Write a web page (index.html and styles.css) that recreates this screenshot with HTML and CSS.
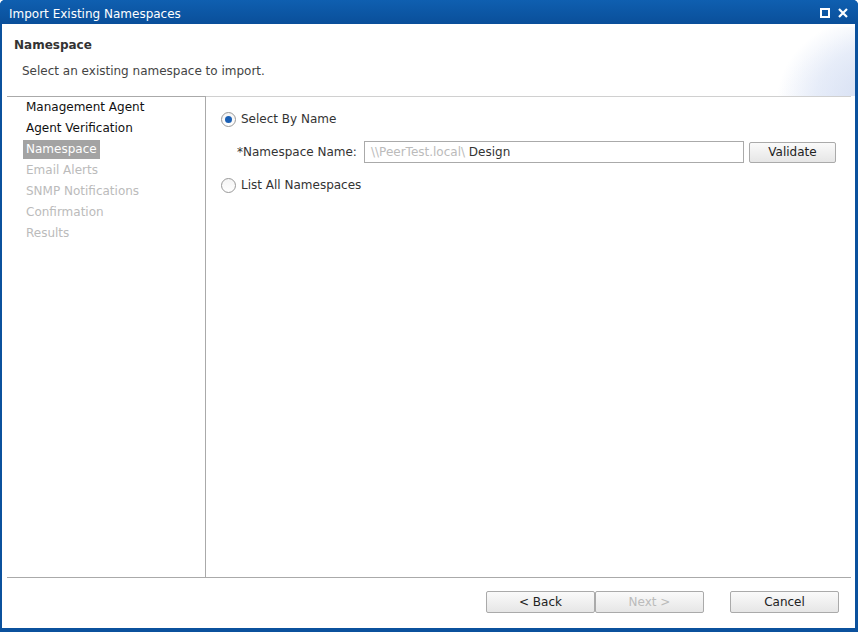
FILE: index.html
```html
<!DOCTYPE html>
<html lang="en">
<head>
    <meta charset="UTF-8">
    <meta name="viewport" content="width=device-width, initial-scale=1.0">
    <title>Import Existing Namespaces</title>
    <link rel="stylesheet" href="styles.css">
</head>
<body>
    <div class="window">
        <div class="titlebar">
            <span class="title">Import Existing Namespaces</span>
            <div class="title-buttons">
                <svg width="10" height="10" viewBox="0 0 10 10"><rect x="1" y="1" width="8" height="8" fill="none" stroke="#fff" stroke-width="2"/></svg>
                <svg width="10" height="10" viewBox="0 0 10 10"><path d="M1 1 L9 9 M9 1 L1 9" stroke="#fff" stroke-width="2.2"/></svg>
            </div>
        </div>
        <div class="client">
            <div class="header">
                <div class="header-title">Namespace</div>
                <div class="header-sub">Select an existing namespace to import.</div>
            </div>
            <div class="main">
                <ul class="nav">
                    <li class="done"><span>Management Agent</span></li>
                    <li class="done"><span>Agent Verification</span></li>
                    <li class="current"><span>Namespace</span></li>
                    <li class="todo"><span>Email Alerts</span></li>
                    <li class="todo"><span>SNMP Notifications</span></li>
                    <li class="todo"><span>Confirmation</span></li>
                    <li class="todo"><span>Results</span></li>
                </ul>
                <div class="page">
                    <label class="option">
                        <span class="radio checked"></span>
                        Select By Name
                    </label>
                    <div class="name-row">
                        <span class="field-label">*Namespace Name:</span>
                        <div class="textbox"><span class="prefix">\\PeerTest.local\</span> Design</div>
                        <button class="btn validate">Validate</button>
                    </div>
                    <label class="option">
                        <span class="radio"></span>
                        List All Namespaces
                    </label>
                </div>
            </div>
            <div class="footer">
                <button class="btn">&lt; Back</button>
                <button class="btn" disabled>Next &gt;</button>
                <button class="btn cancel">Cancel</button>
            </div>
        </div>
    </div>
</body>
</html>
```

FILE: styles.css
```css
body {
    margin: 0;
    font-family: "DejaVu Sans", Verdana, sans-serif;
    font-size: 12px;
    color: #222;
    background: #fff;
}
.window {
    width: 858px;
    height: 632px;
    box-sizing: border-box;
    display: flex;
    flex-direction: column;
    background: #0b519d;
    border-radius: 5px 5px 0 0;
    padding: 0 3px 4px 2px;
}
.titlebar {
    height: 24px;
    box-sizing: border-box;
    display: flex;
    align-items: center;
    justify-content: space-between;
    padding: 3px 10px 0 9px;
    background: linear-gradient(#0f5fb0, #0a4f9a);
    border-radius: 5px 5px 0 0;
    margin: 0 -3px 0 -2px;
    color: #fff;
    font-size: 12px;
}
.title-buttons {
    display: flex;
    gap: 8px;
    padding-bottom: 1px;
}
.client {
    flex: 1;
    display: flex;
    flex-direction: column;
    background: #fff;
}
.header {
    height: 72px;
    box-sizing: border-box;
    padding: 14px 12px 0 12px;
    position: relative;
    overflow: hidden;
}
.header::after {
    content: "";
    position: absolute;
    right: -4px;
    top: 3px;
    width: 110px;
    height: 72px;
    background:
        radial-gradient(ellipse 140px 110px at 125% 100%, rgba(205,216,240,0.85) 0, rgba(214,224,244,0.55) 50%, rgba(255,255,255,0) 78%),
        radial-gradient(ellipse 190px 140px at 150% 135%, rgba(222,230,247,0.6) 0, rgba(255,255,255,0) 75%);
}
.header-title {
    font-weight: bold;
    color: #333;
    font-size: 12px;
}
.header-sub {
    margin-top: 12px;
    padding-left: 8px;
    color: #444;
}
.main {
    flex: 1;
    display: flex;
    margin: 0 4px 0 5px;
    border-bottom: 1px solid #aaa;
}
.nav {
    list-style: none;
    margin: 0;
    padding: 0;
    width: 200px;
    border-top: 1px solid #aaa;
    border-right: 1px solid #aaa;
}
.nav li {
    height: 21px;
    display: flex;
    align-items: center;
    padding-left: 16px;
}
.nav li span {
    padding: 2px 3px 3px;
}
.nav .done {
    color: #111;
}
.nav .current span {
    background: #a3a3a3;
    color: #fff;
}
.nav .todo {
    color: #bbb;
}
.page {
    flex: 1;
    border-top: 1px solid #d0d0d0;
    padding: 11px 15px 0 15px;
}
.option {
    display: flex;
    align-items: center;
    gap: 5px;
    height: 22px;
    color: #333;
}
.radio {
    width: 13px;
    height: 13px;
    border: 1px solid #999;
    border-radius: 50%;
    background: linear-gradient(#f4f4f4, #fff);
    display: flex;
    align-items: center;
    justify-content: center;
}
.radio.checked::after {
    content: "";
    width: 7px;
    height: 7px;
    border-radius: 50%;
    background: #1a5fb4;
}
.name-row {
    display: flex;
    align-items: center;
    margin: 11px 0 11px 16px;
    color: #333;
}
.field-label {
    width: 127px;
}
.textbox {
    width: 372px;
    height: 20px;
    border: 1px solid #aaa;
    padding-left: 6px;
    display: flex;
    align-items: center;
    white-space: pre;
}
.prefix {
    color: #bbb;
}
.btn {
    font-family: inherit;
    font-size: 12px;
    color: #222;
    height: 22px;
    border: 1px solid #aaa;
    border-radius: 2px;
    background: linear-gradient(#fafafa, #e6e6e6);
    padding: 0;
}
.btn:disabled {
    color: #bbb;
}
.validate {
    width: 87px;
    height: 21px;
    margin-left: 5px;
}
.footer {
    height: 50px;
    display: flex;
    justify-content: flex-end;
    align-items: flex-start;
    padding: 13px 16px 0 0;
    box-sizing: border-box;
}
.footer .btn {
    width: 109px;
}
.footer .cancel {
    margin-left: 26px;
}
```
